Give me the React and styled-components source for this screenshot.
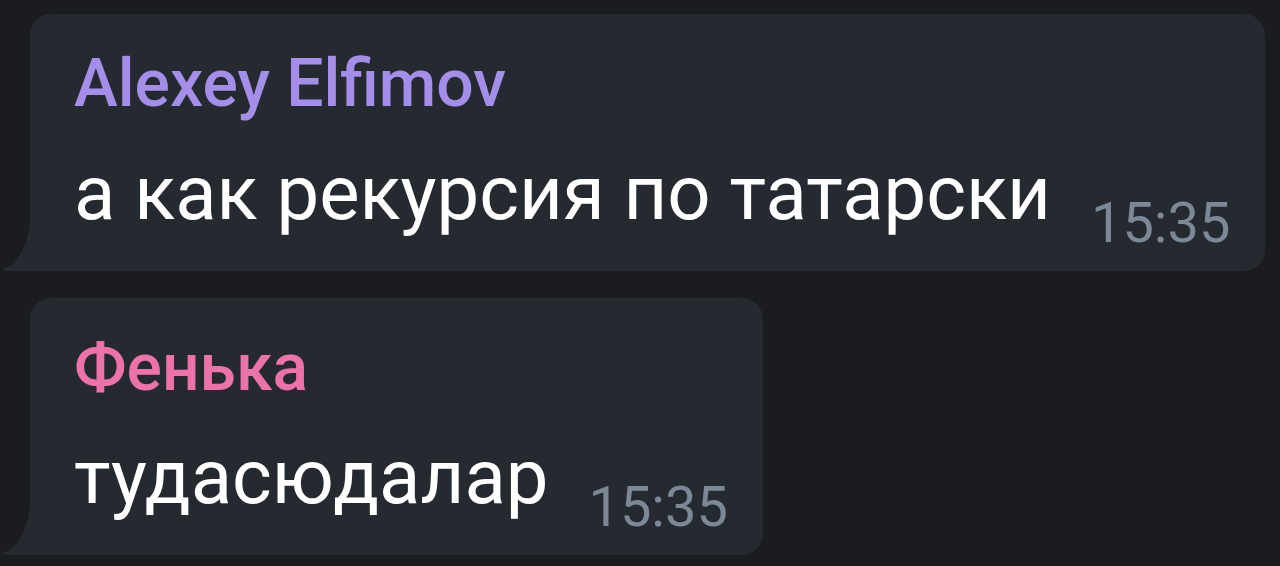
import React from "react";
import styled, { createGlobalStyle } from "styled-components";

const GlobalStyle = createGlobalStyle`
  html, body {
    margin: 0;
    padding: 0;
    background: #1b1c1f;
  }
  body {
    font-family: Roboto, "Noto Sans", sans-serif;
    -webkit-font-smoothing: antialiased;
  }
`;

const Chat = styled.div`
  display: flex;
  flex-direction: column;
  align-items: flex-start;
  gap: 27px;
  padding: 14px 0 0 30px;
  min-height: 566px;
  box-sizing: border-box;
  background: #1b1c1f;
`;

const Bubble = styled.div`
  position: relative;
  display: flex;
  flex-direction: column;
  background: #252a30;
  border-radius: 21px 21px 21px 0;
  padding: 38px 35px 20px 44px;
`;

const Tail = styled.svg`
  position: absolute;
  left: -28px;
  bottom: 0;
  width: 30px;
  height: 56px;
  display: block;
`;

const Author = styled.div`
  font-size: 66px;
  line-height: 64px;
  font-weight: 500;
  color: ${(p) => p.$color};
  white-space: nowrap;
`;

const Row = styled.div`
  display: flex;
  align-items: flex-end;
  margin-top: 19px;
`;

const Text = styled.div`
  font-size: 76px;
  line-height: 116px;
  color: #ffffff;
  white-space: nowrap;
`;

const Time = styled.span`
  font-size: 56px;
  line-height: 56px;
  color: #7c8895;
  margin-left: 40px;
  white-space: nowrap;
`;

const messages = [
  { author: "Alexey Elfimov", color: "#a48ee9", text: "а как рекурсия по татарски", time: "15:35" },
  { author: "Фенька", color: "#ee72aa", text: "тудасюдалар", time: "15:35" },
];

function Message({ author, color, text, time }) {
  return (
    <Bubble>
      <Tail viewBox="0 0 30 56" aria-hidden="true">
        <path
          d="M30 0 L28 0 C28 28 16 48 4 52.5 C0.5 53.6 0.6 56 4 56 L30 56 Z"
          fill="#252a30"
        />
      </Tail>
      <Author $color={color}>{author}</Author>
      <Row>
        <Text>{text}</Text>
        <Time>{time}</Time>
      </Row>
    </Bubble>
  );
}

export default function App() {
  return (
    <>
      <GlobalStyle />
      <Chat>
        {messages.map((m, i) => (
          <Message key={i} {...m} />
        ))}
      </Chat>
    </>
  );
}
